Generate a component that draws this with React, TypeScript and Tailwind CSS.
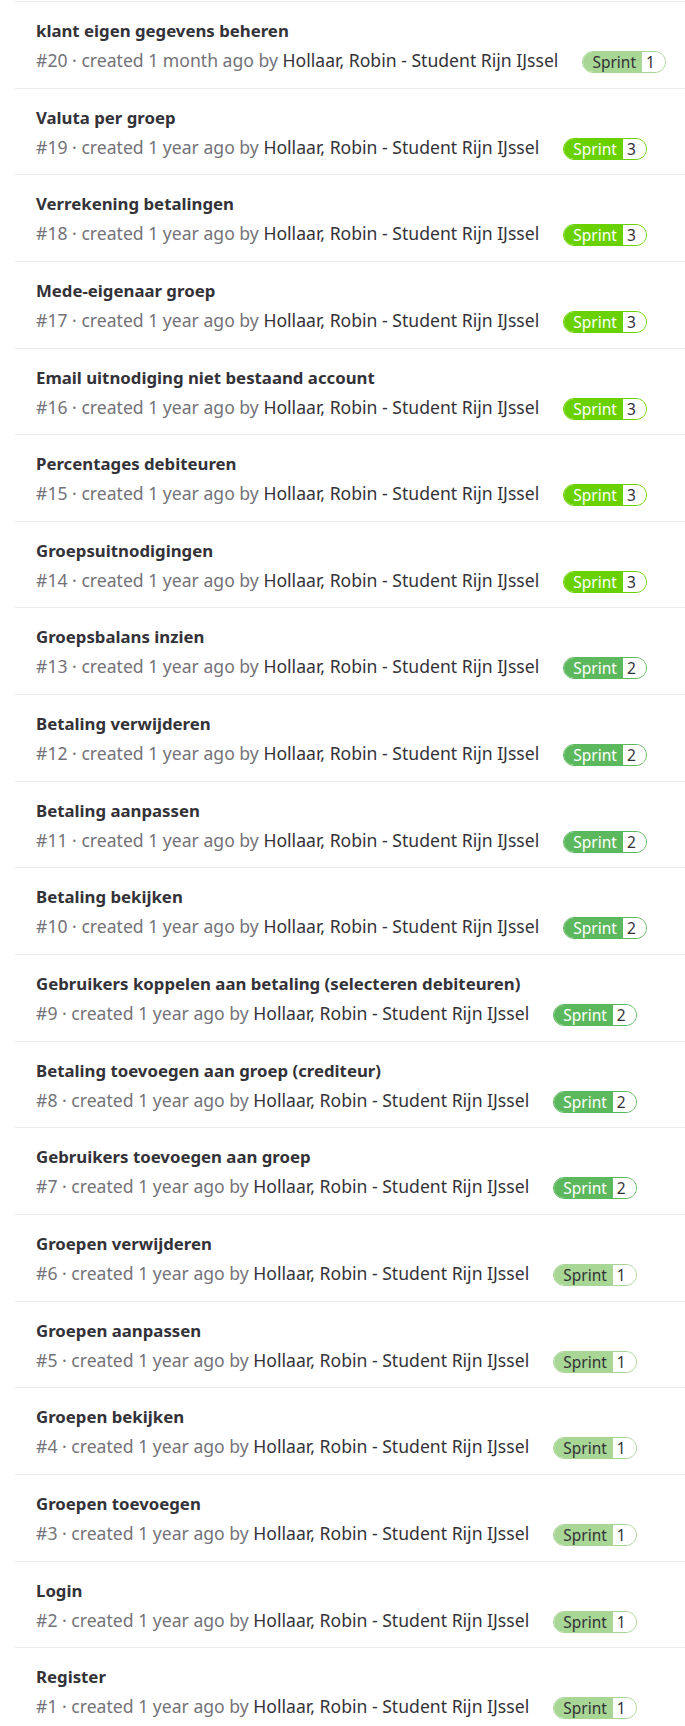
import React from 'react';

type Issue = {
  id: number;
  title: string;
  age: string;
  sprint: 1 | 2 | 3;
};

const issues: Issue[] = [
  { id: 20, title: 'klant eigen gegevens beheren', age: '1 month ago', sprint: 1 },
  { id: 19, title: 'Valuta per groep', age: '1 year ago', sprint: 3 },
  { id: 18, title: 'Verrekening betalingen', age: '1 year ago', sprint: 3 },
  { id: 17, title: 'Mede-eigenaar groep', age: '1 year ago', sprint: 3 },
  { id: 16, title: 'Email uitnodiging niet bestaand account', age: '1 year ago', sprint: 3 },
  { id: 15, title: 'Percentages debiteuren', age: '1 year ago', sprint: 3 },
  { id: 14, title: 'Groepsuitnodigingen', age: '1 year ago', sprint: 3 },
  { id: 13, title: 'Groepsbalans inzien', age: '1 year ago', sprint: 2 },
  { id: 12, title: 'Betaling verwijderen', age: '1 year ago', sprint: 2 },
  { id: 11, title: 'Betaling aanpassen', age: '1 year ago', sprint: 2 },
  { id: 10, title: 'Betaling bekijken', age: '1 year ago', sprint: 2 },
  { id: 9, title: 'Gebruikers koppelen aan betaling (selecteren debiteuren)', age: '1 year ago', sprint: 2 },
  { id: 8, title: 'Betaling toevoegen aan groep (crediteur)', age: '1 year ago', sprint: 2 },
  { id: 7, title: 'Gebruikers toevoegen aan groep', age: '1 year ago', sprint: 2 },
  { id: 6, title: 'Groepen verwijderen', age: '1 year ago', sprint: 1 },
  { id: 5, title: 'Groepen aanpassen', age: '1 year ago', sprint: 1 },
  { id: 4, title: 'Groepen bekijken', age: '1 year ago', sprint: 1 },
  { id: 3, title: 'Groepen toevoegen', age: '1 year ago', sprint: 1 },
  { id: 2, title: 'Login', age: '1 year ago', sprint: 1 },
  { id: 1, title: 'Register', age: '1 year ago', sprint: 1 },
];

// scoped label colours per sprint
const sprintStyle = {
  1: { box: 'border-[#a8d695]', left: 'bg-[#a8d695] text-[#333238]' },
  2: { box: 'border-[#5cb85c]', left: 'bg-[#5cb85c] text-white' },
  3: { box: 'border-[#69d100]', left: 'bg-[#69d100] text-white' },
};

function SprintLabel({ sprint }: { sprint: 1 | 2 | 3 }) {
  const s = sprintStyle[sprint];
  return (
    <span
      className={`ml-[24px] mt-[4px] inline-flex h-[22px] shrink-0 items-stretch overflow-hidden rounded-full border ${s.box} text-[15.5px] leading-[20px]`}
    >
      <span className={`flex items-center pl-[9px] pr-[6px] ${s.left}`}>Sprint</span>
      <span className="flex items-center bg-white pl-[4px] pr-[10px] text-[#333238]">{sprint}</span>
    </span>
  );
}

function IssueRow({ issue }: { issue: Issue }) {
  return (
    <li className="h-[86.65px] border-b border-[#ececef] pl-[21px] pt-[17px]">
      <div className="text-[16.8px] font-bold leading-[24px] text-[#333238]">{issue.title}</div>
      <div className="mt-[4px] flex items-center text-[17.6px] leading-[24px]">
        <span className="whitespace-nowrap text-[#737278]">
          #{issue.id} · created {issue.age} by{' '}
          <span className="text-[#333238]">Hollaar, Robin - Student Rijn IJssel</span>
        </span>
        <SprintLabel sprint={issue.sprint} />
      </div>
    </li>
  );
}

export default function App() {
  return (
    <div
      className="h-[1726px] overflow-hidden bg-white pl-[15px]"
      style={{ fontFamily: '"Noto Sans", "Liberation Sans", sans-serif' }}
    >
      <ul className="mt-px border-t border-[#ececef]">
        {issues.map((issue) => (
          <IssueRow key={issue.id} issue={issue} />
        ))}
      </ul>
    </div>
  );
}
